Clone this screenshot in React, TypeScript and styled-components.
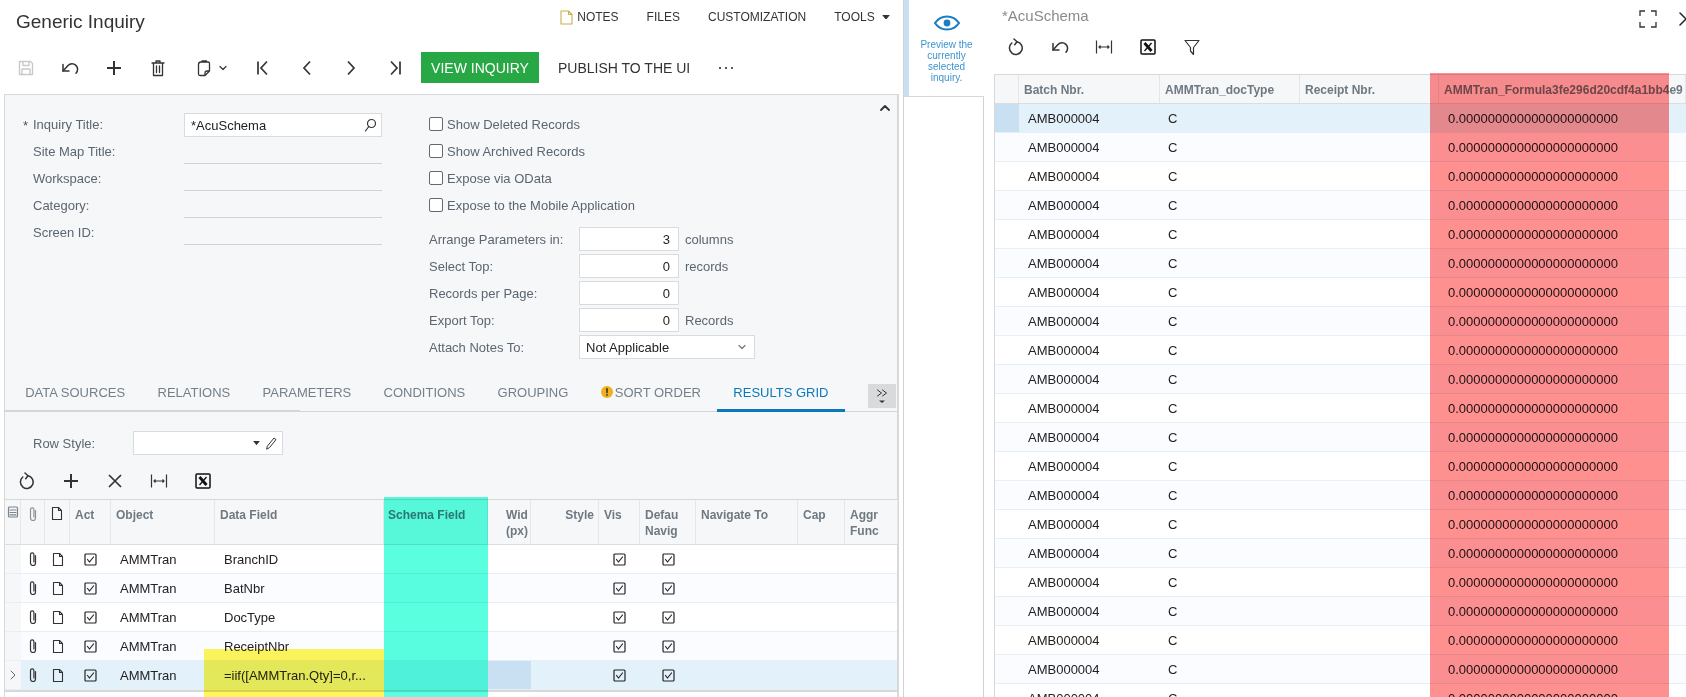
import React from "react";
import styled, { createGlobalStyle } from "styled-components";

const Global = createGlobalStyle`
  html, body { margin: 0; padding: 0; background: #fff; }
  body { font-family: "Liberation Sans", Arial, sans-serif; font-size: 13px; color: #222; }
`;

const Page = styled.div`
  display: flex; width: 1686px; height: 697px; overflow: hidden; background: #fff;
`;
const LeftPane = styled.div`
  position: relative; width: 903px; flex: none; display: flex; flex-direction: column;
`;
const TitleBar = styled.div`
  display: flex; align-items: flex-start; height: 44px; padding-left: 16px; flex: none;
`;
const PageTitle = styled.div`
  font-size: 19px; line-height: 44px; color: #333;
`;
const TopNav = styled.div`
  margin-left: auto; display: flex; align-items: center; gap: 28px; height: 34px; padding-right: 13px;
  font-size: 12px; color: #333;
`;
const NavItem = styled.span`
  display: inline-flex; align-items: center; gap: 4px;
`;
const Toolbar = styled.div<{ $h?: number }>`
  display: flex; align-items: center; height: ${(p) => p.$h ?? 34}px; flex: none;
`;
const MainToolbar = styled(Toolbar)`
  margin-top: 8px; padding-left: 4px;
`;
const IconBtn = styled.span<{ $w?: number }>`
  display: inline-flex; align-items: center; justify-content: center; gap: 6px;
  width: ${(p) => p.$w ?? 44}px; height: 100%; flex: none;
`;
const GreenBtn = styled.span`
  display: inline-flex; align-items: center; justify-content: center;
  margin-left: 4px; width: 118px; height: 100%; background: #28a745; color: #fff; font-size: 14px;
`;
const TextBtn = styled.span`
  padding: 0 19px; font-size: 14px; color: #333; white-space: nowrap;
`;
const MoreDots = styled.span`
  display: inline-flex; margin-left: 9px;
`;
const Panel = styled.div`
  position: relative; flex: 1; margin: 11px 4px 0 4px; background: #f5f7f9;
  border: solid #d6d8da; border-width: 1px 2px 0 1px; display: flex; flex-direction: column; min-height: 0;
`;
const FormArea = styled.div`
  display: flex; height: 278px; padding-top: 18px; box-sizing: border-box; flex: none;
`;
const FormCol1 = styled.div`
  width: 424px; padding-left: 18px; box-sizing: border-box; display: flex; flex-direction: column; gap: 3px; flex: none;
`;
const FormRow = styled.div`
  display: flex; align-items: center; height: 24px; flex: none;
`;
const Req = styled.span`
  width: 10px; flex: none; font-size: 13px; color: #555;
`;
const Label = styled.span<{ $w: number }>`
  width: ${(p) => p.$w}px; flex: none; color: #5c6670; white-space: nowrap;
`;
const TopLabel = styled(Label)`
  margin-top: -2px;
`;
const Input = styled.div`
  position: relative; width: 198px; height: 24px; box-sizing: border-box; display: flex; align-items: center;
  justify-content: space-between; padding: 0 4px 0 6px; background: #fff; border: 1px solid #d9dcdf; color: #222;
`;
const EmptyLine = styled.div`
  width: 198px; height: 24px; box-sizing: border-box; border-bottom: 1px solid #d0d3d6;
`;
const FormCol2 = styled.div`
  display: flex; flex-direction: column; gap: 3px; flex: none;
`;
const CheckLine = styled(FormRow)`
  gap: 4px; color: #5c6670; box-sizing: border-box; padding-bottom: 2px;
`;
const CheckBox = styled.span`
  width: 12px; height: 12px; border: 1px solid #5f6a74; border-radius: 2px; background: #fff; flex: none;
`;
const Spacer = styled.div`
  height: 3px; flex: none;
`;
const NumField = styled.div`
  width: 100px; height: 24px; box-sizing: border-box; background: #fff; border: 1px solid #d9dcdf;
  display: flex; align-items: center; justify-content: flex-end; padding-right: 8px; color: #222;
`;
const Suffix = styled.span`
  margin-left: 6px; color: #5c6670;
`;
const SelectField = styled.div`
  width: 176px; height: 24px; box-sizing: border-box; background: #fff; border: 1px solid #d9dcdf;
  display: flex; align-items: center; justify-content: space-between; padding: 0 8px 0 6px; color: #222;
`;
const Collapse = styled.span`
  margin-left: auto; margin-right: 6px; margin-top: -11px; height: 12px;
`;
const TabBar = styled.div`
  position: relative; display: flex; align-items: center; height: 38px; flex: none; padding-left: 4px;
  border-bottom: 1px solid #d3d6d9; box-sizing: content-box; color: #757f88;
  &::before {
    content: ""; position: absolute; left: 0; bottom: -1px; width: 295px; height: 2px; background: #d3d6d9;
  }
`;
const Tab = styled.span<{ $active?: boolean }>`
  position: relative; display: inline-flex; align-items: center; gap: 2px; height: 100%; padding: 0 16.2px;
  white-space: nowrap; color: ${(p) => (p.$active ? "#0b78bd" : "#757f88")};
  ${(p) =>
    p.$active
      ? `&::after { content: ""; position: absolute; left: 0; right: 0; bottom: -1px; height: 3px; background: #0b78bd; }`
      : ""}
`;
const MoreTab = styled.span`
  margin-left: auto; margin-right: 1px; margin-top: 8px; width: 28px; height: 24px; background: #d9dadb;
  display: flex; align-items: center; justify-content: center;
`;
const StyleRow = styled.div`
  display: flex; align-items: center; height: 24px; padding-left: 28px; margin-top: 19px; flex: none;
`;
const StyleSelect = styled.div`
  width: 150px; height: 24px; box-sizing: border-box; background: #fff; border: 1px solid #d9dcdf;
  display: flex; align-items: center; justify-content: flex-end; gap: 4px; padding-right: 4px;
`;
const GridToolbar = styled(Toolbar)`
  margin-top: 9px; margin-bottom: 1px;
`;
const Grid = styled.div`
  border-top: 1px solid #d6d8da;
`;
const GridFrame = styled.div`
  flex: 1; background: #fff; min-height: 0;
`;
const LeftGrid = styled(Grid)`
  border-bottom: 2px solid #d6d8da;
`;
const Row = styled.div<{ $cols: string; $h: number; $alt?: boolean; $sel?: boolean; $head?: boolean }>`
  display: grid; grid-template-columns: ${(p) => p.$cols}; height: ${(p) => p.$h}px; box-sizing: border-box;
  background: ${(p) => (p.$head ? "#f5f7f9" : p.$sel ? "#e3f1fa" : p.$alt ? "#fafcff" : "#fff")};
  border-bottom: 1px solid ${(p) => (p.$head ? "#d9dee2" : "#e6eff5")};
`;
const HeadCell = styled.div<{ $right?: boolean; $pad?: number }>`
  font-size: 12px; font-weight: 700; line-height: 16px; color: #6f7982; padding: 7px 0 0 ${(p) => p.$pad ?? 5}px;
  border-right: 1px solid #e4e7ea; overflow: hidden; box-sizing: border-box; white-space: pre-line;
  ${(p) => (p.$right ? "text-align: right; padding-right: 4px;" : "")}
`;
const HeadIcon = styled(HeadCell)`
  display: flex; justify-content: center; padding: 6px 0 0;
`;
const Cell = styled.div<{ $pad?: number; $center?: boolean; $bg?: string }>`
  display: flex; align-items: center; min-width: 0; overflow: hidden; white-space: nowrap; color: #222;
  padding-left: ${(p) => p.$pad ?? 0}px;
  ${(p) => (p.$center ? "justify-content: center;" : "")}
  ${(p) => (p.$bg ? `background: ${p.$bg};` : "")}
`;
const Rail = styled.div`
  width: 81px; flex: none; box-sizing: border-box; border-left: 1px solid #d0d2d4; display: flex; flex-direction: column;
`;
const RailTab = styled.div`
  height: 96px; flex: none; box-sizing: border-box; border-left: 5px solid #c9e0f3; display: flex; flex-direction: column;
  align-items: center; padding-top: 14px; color: #3d95d0; font-size: 10px; line-height: 11px; text-align: center;
`;
const RailText = styled.div`
  margin-top: 7px;
`;
const RailBox = styled.div`
  flex: 1; border-top: 1px solid #d6d8da; border-right: 1px solid #d0d2d4;
`;
const RightPane = styled.div`
  position: relative; flex: 1; min-width: 0; display: flex; flex-direction: column; overflow: hidden;
`;
const RightTitleRow = styled.div`
  display: flex; align-items: center; height: 30px; padding: 2px 0 0 18px; box-sizing: border-box; flex: none;
`;
const RightTitle = styled.div`
  font-size: 15px; color: #8a8a8a; margin-top: -2px;
`;
const RightActions = styled.div`
  margin-left: auto; margin-right: -7px; display: flex; align-items: center; gap: 22px; margin-top: 5px;
`;
const RightToolbar = styled(Toolbar)`
  padding-left: 10px; margin-bottom: 10px;
`;
const RightGrid = styled(Grid)`
  margin-left: 10px; border-left: 1px solid #d6d8da;
`;
const Overlay = styled.div<{ $color: string }>`
  position: absolute; background: ${(p) => p.$color}; mix-blend-mode: multiply; pointer-events: none;
`;
const TealBand = styled(Overlay)`
  left: 384px; width: 104px; top: 497px; bottom: 0;
`;
const YellowBand = styled(Overlay)`
  left: 204px; width: 180px; top: 649px; bottom: 0;
`;
const RedBand = styled(Overlay)`
  left: 446px; width: 239px; top: 73px; bottom: 0;
`;

type IP = { s?: number; c?: string; sw?: number; children: React.ReactNode; w?: number; h?: number };
const I = ({ s = 18, w, h, c = "#333", sw = 1.4, children }: IP) => (
  <svg width={w ?? s} height={h ?? s} viewBox={`0 0 ${w ?? s} ${h ?? s}`} fill="none" stroke={c} strokeWidth={sw} strokeLinecap="round" strokeLinejoin="round">
    {children}
  </svg>
);
const Save = () => (
  <I c="#c9c9c9">
    <path d="M2.500 2.500h11l2 2v11h-13z" />
    <path d="M6 2.500v4h6v-4M5 15.500v-5.500h8v5.500" />
  </I>
);
const Undo = () => (
  <I sw={1.5}>
    <path d="M2 5.500V12h6" />
    <path d="M2 12L7 6.500a4.600 4.600 0 0 1 8 7.800" />
  </I>
);
const Plus = () => (
  <I sw={2}>
    <path d="M9 2v14M2 9h14" strokeLinecap="butt" />
  </I>
);
const Times = () => (
  <I sw={1.7}>
    <path d="M3 3l12 12M15 3L3 15" strokeLinecap="butt" />
  </I>
);
const Trash = () => (
  <I sw={1.3}>
    <path d="M3 4h12M7 4V2h4v2M4.500 4v12.500h9V4M7.500 7v6.500M10.500 7v6.500" />
  </I>
);
const CopyDoc = () => (
  <I sw={1.3}>
    <path d="M6 3h7a1.500 1.500 0 0 1 1.500 1.500V12l-4.500 4.500H5A1.500 1.500 0 0 1 3.500 15V5.500A2.500 2.500 0 0 1 6 3zM7 3V2h4.500v1M14.500 12H12a2 2 0 0 0-2 2v2.500" />
  </I>
);
const ChevDown = ({ c = "#333" }: { c?: string }) => (
  <I s={8} c={c} sw={1.2}>
    <path d="M1 2.500L4 5.500 7 2.500" />
  </I>
);
const First = () => (
  <I sw={1.7}>
    <path d="M4 2.500v13M13 2.500L7 9l6 6.500" strokeLinecap="butt" strokeLinejoin="miter" />
  </I>
);
const Last = () => (
  <I sw={1.7}>
    <path d="M14 2.500v13M5 2.500L11 9l-6 6.500" strokeLinecap="butt" strokeLinejoin="miter" />
  </I>
);
const Prev = () => (
  <I sw={1.7}>
    <path d="M12 2.500L6 9l6 6.500" strokeLinecap="butt" strokeLinejoin="miter" />
  </I>
);
const Next = () => (
  <I sw={1.7}>
    <path d="M6 2.500L12 9l-6 6.500" strokeLinecap="butt" strokeLinejoin="miter" />
  </I>
);
const Reload = () => (
  <I sw={1.5}>
    <path d="M10 3.700A6.400 6.400 0 1 1 4.800 5" />
    <path d="M7 1l3 2.700-2.300 3" />
  </I>
);
const Fit = () => (
  <I sw={1.2}>
    <path d="M1.500 2.500v13M16.500 2.500v13M4 9h10M5.500 7.500L4 9l1.500 1.500M12.500 7.500L14 9l-1.500 1.500" strokeLinecap="butt" />
  </I>
);
const Excel = () => (
  <I c="#111" sw={1.5}>
    <rect x="2" y="2" width="14" height="14" rx="1" />
    <path d="M5.500 5l7 8" strokeWidth={2.8} strokeLinecap="butt" />
    <path d="M12.500 5l-7 8" strokeWidth={1.3} strokeLinecap="butt" />
  </I>
);
const Funnel = () => (
  <I sw={1.2}>
    <path d="M2 2.500h14L10.500 9.500v7l-3-3.500V9.500z" />
  </I>
);
const Search = () => (
  <I s={14} sw={1.2}>
    <circle cx="8.500" cy="5.500" r="4" />
    <path d="M5.800 8.500L2.500 13" />
  </I>
);
const Pencil = () => (
  <I s={14} sw={1}>
    <path d="M3.500 10L10 2l2 1.600-6.500 8L3 13z" />
  </I>
);
const Clip = ({ c = "#333" }: { c?: string }) => (
  <I w={10} h={16} c={c} sw={1.2}>
    <path d="M7.500 4.500v7.500a2.500 2.500 0 0 1-5 0V3.500a1.700 1.700 0 0 1 3.400 0V11" />
  </I>
);
const Doc = () => (
  <I w={12} h={15} sw={1.1}>
    <path d="M1.500 1.500h6l3 3V13.500h-9zM7.500 1.500v3h3" />
  </I>
);
const Note = () => (
  <I w={13} h={15} c="#c8b04a" sw={1.1}>
    <path d="M1 1h7.500l3.500 3.500V14H1zM8.500 1v3.500H12" />
  </I>
);
const Tick = () => (
  <I s={13} sw={1.2} c="#222">
    <rect x="1" y="1" width="11" height="11" rx="1" />
    <path d="M3.500 6.500L5.500 9 9.500 4" />
  </I>
);
const Eye = () => (
  <I w={28} h={18} c="#1a7fc1" sw={2.2}>
    <path d="M2 9C5 4.500 9 2.500 14 2.500S23 4.500 26 9c-3 4.500-7 6.500-12 6.500S5 13.500 2 9z" />
    <circle cx="14" cy="9" r="3.400" fill="#1a7fc1" stroke="none" />
  </I>
);
const Warn = () => (
  <I s={12} c="#fff" sw={1.6}>
    <circle cx="6" cy="6" r="6" fill="#f2b01e" stroke="none" />
    <path d="M6 2.800v3.800M6 8.800v.4" stroke="#333" />
  </I>
);
const Caret = ({ w = 8 }: { w?: number }) => (
  <svg width={w} height={w * 0.6} viewBox="0 0 8 5"><path d="M0 0h8L4 5z" fill="#333" /></svg>
);
const Dots = () => (
  <svg width="16" height="4" viewBox="0 0 16 4" fill="#333">
    <circle cx="2" cy="2" r="1.100" /><circle cx="8" cy="2" r="1.100" /><circle cx="14" cy="2" r="1.100" />
  </svg>
);
const UpChev = () => (
  <I s={12} sw={1.8}>
    <path d="M2 8l4-4 4 4" />
  </I>
);
const DoubleChev = () => (
  <I s={16} sw={1}>
    <path d="M3.500 2l4 3-4 3M8.500 2l4 3-4 3" />
    <path d="M5 12.500h6L8 15z" fill="#333" stroke="none" />
  </I>
);
const ColsIcon = () => (
  <I s={12} c="#7a848c" sw={1.2}>
    <rect x="1.500" y="1" width="9" height="10" rx="1" />
    <path d="M3 4h6M3 6.500h6M3 8.800h6" />
  </I>
);
const Fullscreen = () => (
  <I sw={1.3} c="#333">
    <path d="M1 6V1h5M12 1h5v5M1 12v5h5M12 17h5v-5" strokeLinecap="butt" strokeLinejoin="miter" />
  </I>
);
const CloseX = () => (
  <I s={14} sw={1.5} c="#222">
    <path d="M1 1l12 12M13 1L1 13" />
  </I>
);

const LCOLS = "16px 24px 25px 41px 104px 169px 104px 43px 68px 41px 56px 102px 47px 53px";
const RCOLS = "24px 141px 140px 139px 1fr";
const leftRows = [
  { obj: "AMMTran", field: "BranchID" },
  { obj: "AMMTran", field: "BatNbr" },
  { obj: "AMMTran", field: "DocType" },
  { obj: "AMMTran", field: "ReceiptNbr" },
  { obj: "AMMTran", field: "=iif([AMMTran.Qty]=0,r..." },
];
const ZEROS = "0.0000000000000000000000";
const rightRows = Array.from({ length: 21 }, (_, i) => i);

const tabs = ["DATA SOURCES", "RELATIONS", "PARAMETERS", "CONDITIONS", "GROUPING"];

export default function App() {
  return (
    <Page>
      <Global />
      <LeftPane>
        <TitleBar>
          <PageTitle>Generic Inquiry</PageTitle>
          <TopNav>
            <NavItem><Note />NOTES</NavItem>
            <NavItem>FILES</NavItem>
            <NavItem>CUSTOMIZATION</NavItem>
            <NavItem>TOOLS&nbsp;<Caret /></NavItem>
          </TopNav>
        </TitleBar>
        <MainToolbar $h={31}>
          <IconBtn><Save /></IconBtn>
          <IconBtn><Undo /></IconBtn>
          <IconBtn><Plus /></IconBtn>
          <IconBtn><Trash /></IconBtn>
          <IconBtn $w={61}><CopyDoc /><ChevDown /></IconBtn>
          <IconBtn><First /></IconBtn>
          <IconBtn><Prev /></IconBtn>
          <IconBtn><Next /></IconBtn>
          <IconBtn><Last /></IconBtn>
          <GreenBtn>VIEW INQUIRY</GreenBtn>
          <TextBtn>PUBLISH TO THE UI</TextBtn>
          <MoreDots><Dots /></MoreDots>
        </MainToolbar>
        <Panel>
          <FormArea>
            <FormCol1>
              <FormRow><Req>*</Req><TopLabel $w={151}>Inquiry Title:</TopLabel><Input>*AcuSchema<Search /></Input></FormRow>
              <FormRow><Req /><TopLabel $w={151}>Site Map Title:</TopLabel><EmptyLine /></FormRow>
              <FormRow><Req /><TopLabel $w={151}>Workspace:</TopLabel><EmptyLine /></FormRow>
              <FormRow><Req /><TopLabel $w={151}>Category:</TopLabel><EmptyLine /></FormRow>
              <FormRow><Req /><TopLabel $w={151}>Screen ID:</TopLabel><EmptyLine /></FormRow>
            </FormCol1>
            <FormCol2>
              <CheckLine><CheckBox />Show Deleted Records</CheckLine>
              <CheckLine><CheckBox />Show Archived Records</CheckLine>
              <CheckLine><CheckBox />Expose via OData</CheckLine>
              <CheckLine><CheckBox />Expose to the Mobile Application</CheckLine>
              <Spacer />
              <FormRow><Label $w={150}>Arrange Parameters in:</Label><NumField>3</NumField><Suffix>columns</Suffix></FormRow>
              <FormRow><Label $w={150}>Select Top:</Label><NumField>0</NumField><Suffix>records</Suffix></FormRow>
              <FormRow><Label $w={150}>Records per Page:</Label><NumField>0</NumField></FormRow>
              <FormRow><Label $w={150}>Export Top:</Label><NumField>0</NumField><Suffix>Records</Suffix></FormRow>
              <FormRow><Label $w={150}>Attach Notes To:</Label><SelectField>Not Applicable<ChevDown c="#777" /></SelectField></FormRow>
            </FormCol2>
            <Collapse><UpChev /></Collapse>
          </FormArea>
          <TabBar>
            {tabs.map((t) => <Tab key={t}>{t}</Tab>)}
            <Tab><Warn />SORT ORDER</Tab>
            <Tab $active>RESULTS GRID</Tab>
            <MoreTab><DoubleChev /></MoreTab>
          </TabBar>
          <StyleRow>
            <Label $w={100}>Row Style:</Label>
            <StyleSelect><Caret w={7} /><Pencil /></StyleSelect>
          </StyleRow>
          <GridToolbar>
            <IconBtn><Reload /></IconBtn>
            <IconBtn><Plus /></IconBtn>
            <IconBtn><Times /></IconBtn>
            <IconBtn><Fit /></IconBtn>
            <IconBtn><Excel /></IconBtn>
          </GridToolbar>
          <GridFrame>
            <LeftGrid>
              <Row $cols={LCOLS} $h={45} $head>
                <HeadIcon><ColsIcon /></HeadIcon>
                <HeadIcon><Clip c="#8b949c" /></HeadIcon>
                <HeadIcon><Doc /></HeadIcon>
                <HeadCell>Act</HeadCell>
                <HeadCell>Object</HeadCell>
                <HeadCell>Data Field</HeadCell>
                <HeadCell $pad={4}>Schema Field</HeadCell>
                <HeadCell $pad={18}>{"Wid\n(px)"}</HeadCell>
                <HeadCell $right>Style</HeadCell>
                <HeadCell>Vis</HeadCell>
                <HeadCell>{"Defau\nNavig"}</HeadCell>
                <HeadCell>Navigate To</HeadCell>
                <HeadCell>Cap</HeadCell>
                <HeadCell>{"Aggr\nFunc"}</HeadCell>
              </Row>
              {leftRows.map((r, i) => {
                const sel = i === 4;
                return (
                  <Row key={i} $cols={LCOLS} $h={29} $alt={i % 2 === 1} $sel={sel}>
                    <Cell $center $bg="#f5f7f9">{sel && (
                      <I s={10} c="#666" sw={1}><path d="M3 1l4 4-4 4" /></I>
                    )}</Cell>
                    <Cell $center><Clip /></Cell>
                    <Cell $center><Doc /></Cell>
                    <Cell $center><Tick /></Cell>
                    <Cell $pad={9}>{r.obj}</Cell>
                    <Cell $pad={9}>{r.field}</Cell>
                    <Cell />
                    <Cell $bg={sel ? "#c9dff2" : undefined} />
                    <Cell />
                    <Cell $center><Tick /></Cell>
                    <Cell $center><Tick /></Cell>
                    <Cell />
                    <Cell />
                    <Cell />
                  </Row>
                );
              })}
            </LeftGrid>
          </GridFrame>
        </Panel>
        <TealBand $color="#5affdf" />
        <YellowBand $color="#fff65c" />
      </LeftPane>
      <Rail>
        <RailTab>
          <Eye />
          <RailText>Preview the<br />currently<br />selected<br />inquiry.</RailText>
        </RailTab>
        <RailBox />
      </Rail>
      <RightPane>
        <RightTitleRow>
          <RightTitle>*AcuSchema</RightTitle>
          <RightActions><Fullscreen /><CloseX /></RightActions>
        </RightTitleRow>
        <RightToolbar>
          <IconBtn><Reload /></IconBtn>
          <IconBtn><Undo /></IconBtn>
          <IconBtn><Fit /></IconBtn>
          <IconBtn><Excel /></IconBtn>
          <IconBtn><Funnel /></IconBtn>
        </RightToolbar>
        <RightGrid>
          <Row $cols={RCOLS} $h={29} $head>
            <HeadCell />
            <HeadCell>Batch Nbr.</HeadCell>
            <HeadCell>AMMTran_docType</HeadCell>
            <HeadCell>Receipt Nbr.</HeadCell>
            <HeadCell>AMMTran_Formula3fe296d20cdf4a1bb4e9</HeadCell>
          </Row>
          {rightRows.map((i) => (
            <Row key={i} $cols={RCOLS} $h={29} $alt={i % 2 === 1} $sel={i === 0}>
              <Cell $bg={i === 0 ? "#c9e0f3" : undefined} />
              <Cell $pad={9}>AMB000004</Cell>
              <Cell $pad={8}>C</Cell>
              <Cell />
              <Cell $pad={9}>{ZEROS}</Cell>
            </Row>
          ))}
        </RightGrid>
        <RedBand $color="#ff9090" />
      </RightPane>
    </Page>
  );
}
